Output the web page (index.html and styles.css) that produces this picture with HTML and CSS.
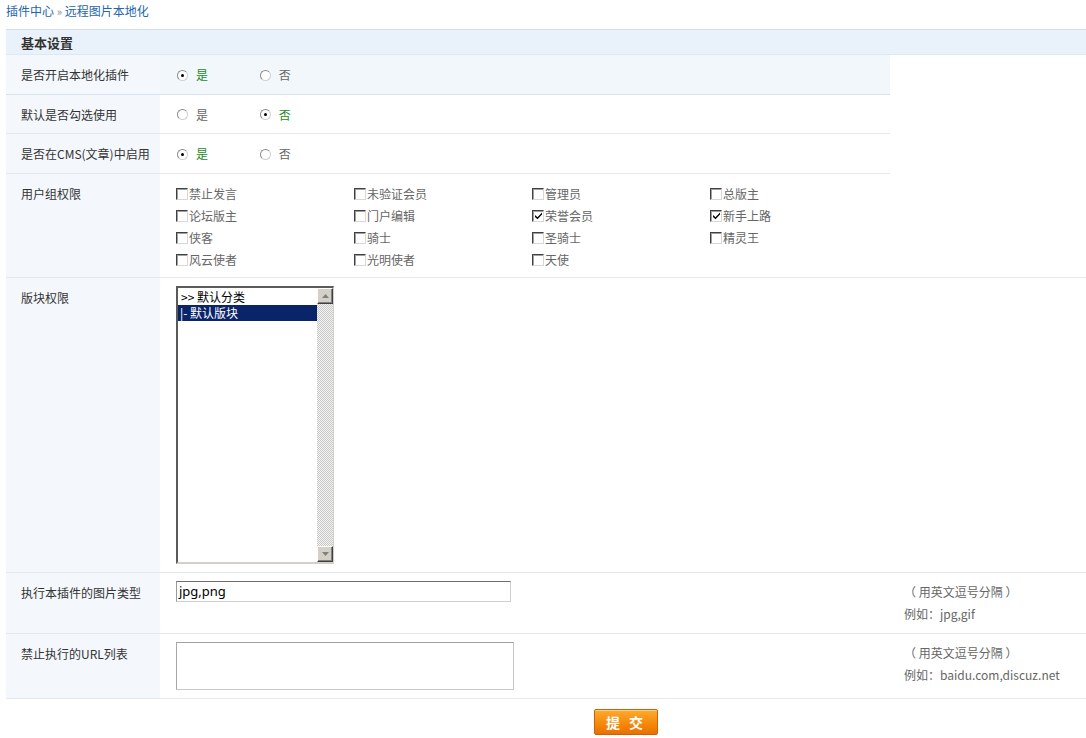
FILE: index.html
```html
<!DOCTYPE html>
<html lang="zh-CN">
<head>
<meta charset="utf-8">
<title>远程图片本地化</title>
<link rel="stylesheet" href="styles.css">
</head>
<body>
<div class="crumb"><a>插件中心</a> <span class="sep">»</span> <a>远程图片本地化</a></div>
<div class="panel">
  <div class="head">基本设置</div>

  <div class="row short hover">
    <div class="lbl">是否开启本地化插件</div>
    <div class="val">
      <span class="opt on"><i class="radio checked"></i>是</span>
      <span class="opt"><i class="radio"></i>否</span>
    </div>
  </div>
  <div class="row short">
    <div class="lbl">默认是否勾选使用</div>
    <div class="val">
      <span class="opt"><i class="radio"></i>是</span>
      <span class="opt on"><i class="radio checked"></i>否</span>
    </div>
  </div>
  <div class="row short">
    <div class="lbl">是否在CMS(文章)中启用</div>
    <div class="val">
      <span class="opt on"><i class="radio checked"></i>是</span>
      <span class="opt"><i class="radio"></i>否</span>
    </div>
  </div>

  <div class="row">
    <div class="lbl">用户组权限</div>
    <div class="val val-cb">
      <div class="cbgrid">
        <span class="cb"><i class="box"></i>禁止发言</span>
        <span class="cb"><i class="box"></i>未验证会员</span>
        <span class="cb"><i class="box"></i>管理员</span>
        <span class="cb"><i class="box"></i>总版主</span>
        <span class="cb"><i class="box"></i>论坛版主</span>
        <span class="cb"><i class="box"></i>门户编辑</span>
        <span class="cb"><i class="box"><svg viewBox="0 0 9 9" width="9" height="9"><path d="M1 4 L3.5 6.3 L8 1.5 L8 3.6 L3.5 8.3 L1 6 Z" fill="#000"/></svg></i>荣誉会员</span>
        <span class="cb"><i class="box"><svg viewBox="0 0 9 9" width="9" height="9"><path d="M1 4 L3.5 6.3 L8 1.5 L8 3.6 L3.5 8.3 L1 6 Z" fill="#000"/></svg></i>新手上路</span>
        <span class="cb"><i class="box"></i>侠客</span>
        <span class="cb"><i class="box"></i>骑士</span>
        <span class="cb"><i class="box"></i>圣骑士</span>
        <span class="cb"><i class="box"></i>精灵王</span>
        <span class="cb"><i class="box"></i>风云使者</span>
        <span class="cb"><i class="box"></i>光明使者</span>
        <span class="cb"><i class="box"></i>天使</span>
      </div>
    </div>
    <div class="tip"></div>
  </div>

  <div class="row">
    <div class="lbl">版块权限</div>
    <div class="val val-box">
      <div class="listbox">
        <div class="items">
          <div class="item">&gt;&gt; 默认分类</div>
          <div class="item sel">|- 默认版块</div>
        </div>
        <div class="sbar">
          <div class="sbtn"><svg viewBox="0 0 7 4" width="7" height="4"><path d="M0 4 L3.5 0 L7 4 Z" fill="#808080"/></svg></div>
          <div class="track"></div>
          <div class="sbtn"><svg viewBox="0 0 7 4" width="7" height="4"><path d="M0 0 L7 0 L3.5 4 Z" fill="#808080"/></svg></div>
        </div>
      </div>
    </div>
    <div class="tip"></div>
  </div>

  <div class="row">
    <div class="lbl">执行本插件的图片类型</div>
    <div class="val val-box"><div class="text">jpg,png</div></div>
    <div class="tip">（ 用英文逗号分隔 ）<br>例如：jpg,gif</div>
  </div>

  <div class="row">
    <div class="lbl">禁止执行的URL列表</div>
    <div class="val val-box"><div class="area"></div></div>
    <div class="tip">（ 用英文逗号分隔 ）<br>例如：baidu.com,discuz.net</div>
  </div>

  <div class="submit"><span class="btn">提 交</span></div>
</div>
</body>
</html>
```

FILE: styles.css
```css
* { box-sizing: border-box; }
html, body { margin: 0; padding: 0; background: #fff; }
body {
  font-family: "Noto Sans CJK SC", "Microsoft YaHei", sans-serif;
  font-size: 12px;
  color: #333;
  width: 1086px;
  overflow: hidden;
}
.crumb {
  height: 22px;
  line-height: 22px;
  padding-left: 6px;
  color: #2366a8;
}
.crumb a { color: #2366a8; }
.crumb .sep { color: #6f8ba6; font-size: 11px; }

.panel {
  margin: 7px 0 0 6px;
  width: 1080px;
}
.head {
  border-top: 1px solid #cfdeea;
  border-bottom: 1px solid #dce8f2;
  background: #e9f2fa;
  height: 26px;
  line-height: 25px;
  padding-left: 15px;
  font-size: 13px;
  font-weight: bold;
  color: #333;
}
.row {
  display: grid;
  grid-template-columns: 154px 730px 196px;
  border-bottom: 1px solid #e2e8ee;
}
.row.short {
  grid-template-columns: 154px 730px;
  width: 884px;
}
.row.hover { background: #f2f7fc; border-bottom-color: #d7e3ee; }
.lbl {
  background: #f4f8fc;
  padding: 11px 0 9px 15px;
  line-height: 18px;
  color: #333;
}
.val {
  padding: 11px 0 9px 17px;
  line-height: 18px;
  color: #666;
}
.val-cb { padding: 9px 0 6px 16px; }
.val-box { padding: 8px 0 8px 16px; }
.opt {
  display: inline-flex;
  align-items: center;
  width: 80px;
}
.opt.on { color: #1e8a1e; }
.radio {
  display: inline-block;
  width: 11px;
  height: 11px;
  border-radius: 50%;
  border: 1px solid #8c8c8c;
  border-right-color: #d0d0d0;
  border-bottom-color: #d0d0d0;
  background: #fff;
  margin-right: 8px;
  position: relative;
}
.radio.checked::after {
  content: "";
  position: absolute;
  left: 3px;
  top: 3px;
  width: 3px;
  height: 3px;
  border-radius: 50%;
  background: #000;
}

.cbgrid {
  display: grid;
  grid-template-columns: repeat(4, 178px);
}
.cb {
  display: flex;
  align-items: center;
  height: 22px;
  color: #666;
}
.box {
  display: inline-flex;
  align-items: center;
  justify-content: center;
  width: 12px;
  height: 12px;
  border-top: 1px solid #404040;
  border-left: 1px solid #404040;
  border-right: 1px solid #d8d8d8;
  border-bottom: 1px solid #d8d8d8;
  box-shadow: inset 1px 1px 0 #a0a0a0;
  background: #fff;
  margin-right: 1px;
}

.listbox {
  display: flex;
  width: 158px;
  height: 278px;
  border-top: 2px solid #5a5a5a;
  border-left: 2px solid #5a5a5a;
  border-right: 1px solid #d4d0c8;
  border-bottom: 2px solid #d4d0c8;
  background: #fff;
}
.items { flex: 1; padding-top: 1px; }
.item {
  height: 16px;
  line-height: 16px;
  padding-left: 3px;
  color: #000;
  font-size: 12px;
}
.item.sel { background: #0a246a; color: #fff; padding-left: 2px; }
.sbar {
  width: 16px;
  display: flex;
  flex-direction: column;
}
.sbtn {
  height: 16px;
  background: #d4d0c8;
  border-top: 1px solid #fff;
  border-left: 1px solid #fff;
  border-right: 1px solid #404040;
  border-bottom: 1px solid #404040;
  box-shadow: inset -1px -1px 0 #808080;
  display: flex;
  align-items: center;
  justify-content: center;
}
.track {
  flex: 1;
  background: repeating-conic-gradient(#c8c8c8 0 25%, #f4f4f4 0 50%) 0 0 / 2px 2px;
}

.text {
  width: 335px;
  height: 21px;
  border: 1px solid #cfcfcf;
  border-top-color: #6e6e6e;
  border-left-color: #9a9a9a;
  padding-left: 2px;
  line-height: 19px;
  font-size: 13px;
  color: #000;
  font-family: "Noto Sans", "Noto Sans CJK SC", sans-serif;
}
.area {
  width: 338px;
  height: 48px;
  border: 1px solid #c8c8c8;
  border-top-color: #a0a0a0;
  border-left-color: #a8a8a8;
}
.tip {
  padding: 8px 0 8px 14px;
  line-height: 22px;
  color: #666;
}
.submit {
  padding-top: 10px;
  padding-left: 588px;
}
.btn {
  display: inline-block;
  width: 64px;
  height: 26px;
  line-height: 24px;
  text-align: center;
  color: #fff;
  font-weight: bold;
  font-size: 14px;
  letter-spacing: 3px;
  border: 1px solid #c9620a;
  border-radius: 2px;
  background: linear-gradient(#ffab2e, #f58a0b 55%, #ea7000);
  box-shadow: inset 0 1px 0 #ffd08a;
}
```
